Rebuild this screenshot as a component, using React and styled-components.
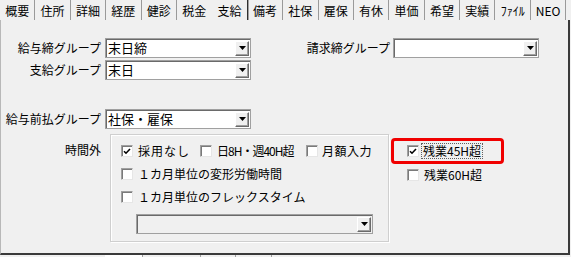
import React from 'react';
import styled, { createGlobalStyle } from 'styled-components';

const GlobalStyle = createGlobalStyle`
  html, body {
    margin: 0;
    padding: 0;
    background: #f0f0f0;
  }
  body {
    font-family: "Noto Sans CJK JP", "Noto Sans", sans-serif;
  }
`;

const Screen = styled.div`
  width: 571px;
  height: 257px;
  overflow: hidden;
  background: #f0f0f0;
  color: #000;
  font-family: "Noto Sans CJK JP", "Noto Sans", sans-serif;
  font-size: 12px;
`;

const TabBar = styled.div`
  display: flex;
  height: 20px;
`;

const Tab = styled.div`
  flex: 0 0 35.4px;
  box-sizing: border-box;
  display: flex;
  align-items: center;
  justify-content: center;
  font-size: 12px;
  line-height: 1;
  padding-top: 1px;
  border-right: 1px solid ${(p) => (p.$active ? '#303030' : p.$hideSep ? 'transparent' : '#9a9a9a')};
  box-shadow: ${(p) => (p.$active ? '1px 0 0 #a0a0a0' : 'none')};
`;

const Panel = styled.div`
  box-sizing: border-box;
  width: 570px;
  height: 235px;
  border-left: 1px solid #b8b8b8;
  border-right: 2px solid #3a3a3a;
  border-bottom: 2px solid #3a3a3a;
  padding-top: 18px;
`;

const Row = styled.div`
  display: flex;
  align-items: ${(p) => p.$align || 'center'};
  margin-top: ${(p) => p.$mt || 0}px;
`;

const Label = styled.div`
  width: ${(p) => p.$w}px;
  margin-left: ${(p) => p.$ml || 0}px;
  margin-right: ${(p) => p.$mr || 4}px;
  padding-top: ${(p) => p.$pt || 0}px;
  text-align: right;
  font-size: 12px;
  line-height: 14px;
  white-space: nowrap;
`;

const Select = styled.div`
  box-sizing: border-box;
  width: ${(p) => p.$w}px;
  height: 20px;
  display: flex;
  align-items: center;
  background: ${(p) => (p.$disabled ? '#f0f0f0' : '#fff')};
  border: 1px solid #a0a0a0;
  box-shadow: inset 1px 1px 0 #6a6a6a;
  padding: 2px 1px 2px 2px;
  margin-left: ${(p) => p.$ml || 0}px;
  margin-top: ${(p) => p.$mt || 0}px;
`;

const SelectText = styled.span`
  flex: 1;
  font-size: 13px;
  line-height: 16px;
  white-space: nowrap;
`;

const ArrowButton = styled.span`
  box-sizing: border-box;
  width: 14px;
  height: 15px;
  display: flex;
  align-items: center;
  justify-content: center;
  background: #f0f0f0;
  border: 1px solid;
  border-color: #fff #6a6a6a #6a6a6a #fff;
  box-shadow: inset -1px -1px 0 #a0a0a0;
`;

const GroupBox = styled.div`
  box-sizing: border-box;
  width: 279px;
  height: 108px;
  margin-left: 5px;
  border: 1px solid #cfcfcf;
  box-shadow: inset 1px 1px 0 #fff, 1px 1px 0 #fff;
  padding: 8px 0 0 10px;
  display: flex;
  flex-direction: column;
`;

const CheckRow = styled.div`
  display: flex;
  align-items: center;
  height: 16px;
  margin-top: ${(p) => p.$mt || 0}px;
`;

const CheckItem = styled.div`
  display: flex;
  align-items: center;
  width: ${(p) => (p.$w ? `${p.$w}px` : 'auto')};
  margin-left: ${(p) => p.$ml || 0}px;
  margin-top: ${(p) => p.$mt || 0}px;
`;

const Box = styled.span`
  box-sizing: border-box;
  flex: 0 0 12px;
  width: 12px;
  height: 12px;
  display: flex;
  align-items: center;
  justify-content: center;
  background: #fff;
  border: 1px solid;
  border-color: #a0a0a0 #e6e6e6 #e6e6e6 #a0a0a0;
  box-shadow: inset 1px 1px 0 #7a7a7a;
`;

const CheckText = styled.span`
  margin-left: ${(p) => p.$ml || 3}px;
  font-size: 12px;
  line-height: 14px;
  white-space: nowrap;
  letter-spacing: ${(p) => p.$ls || 0}px;
  border: 1px dotted ${(p) => (p.$focus ? '#606060' : 'transparent')};
  padding: 0 1px;
`;

const SideColumn = styled.div`
  display: flex;
  flex-direction: column;
  margin-left: 2px;
  margin-top: 4px;
`;

const Highlight = styled.div`
  box-sizing: border-box;
  width: 113px;
  height: 26px;
  border: 3px solid #f00000;
  border-radius: 4px;
  display: flex;
  align-items: center;
  padding-left: 13px;
`;

const BottomTabs = styled.div`
  display: flex;
  height: 16px;
  margin-left: 105px;
`;

const BottomTab = styled.div`
  box-sizing: border-box;
  width: ${(p) => p.$w}px;
  background: ${(p) => (p.$active ? '#fff' : 'transparent')};
  border-right: 1px solid #a0a0a0;
`;

const Check = ({ checked }) => (
  <Box>
    {checked && (
      <svg width="8" height="7" viewBox="0 0 8 7">
        <path d="M1 3.2 L3 5.2 L7 1" fill="none" stroke="#000" strokeWidth="1.6" />
      </svg>
    )}
  </Box>
);

const Combo = ({ w, text, disabled, ml, mt }) => (
  <Select $w={w} $disabled={disabled} $ml={ml} $mt={mt}>
    <SelectText>{text}</SelectText>
    <ArrowButton>
      <svg width="7" height="4" viewBox="0 0 7 4">
        <path d="M0 0 H7 L3.5 4 Z" fill="#000" />
      </svg>
    </ArrowButton>
  </Select>
);

const tabs = ['概要', '住所', '詳細', '経歴', '健診', '税金', '支給', '備考', '社保', '雇保', '有休', '単価', '希望', '実績', 'ﾌｧｲﾙ', 'NEO'];
const activeTab = 6;

export default function App() {
  return (
    <Screen>
      <GlobalStyle />
      <TabBar>
        {tabs.map((t, i) => (
          <Tab key={t} $active={i === activeTab} $hideSep={i === activeTab - 1}>
            {t}
          </Tab>
        ))}
      </TabBar>

      <Panel>
        <Row>
          <Label $w={100}>給与締グループ</Label>
          <Combo w={146} text="末日締" />
          <Label $w={84} $ml={55} $mr={3}>請求締グループ</Label>
          <Combo w={146} text="" />
        </Row>
        <Row $mt={2}>
          <Label $w={100}>支給グループ</Label>
          <Combo w={146} text="末日" />
        </Row>
        <Row $mt={29}>
          <Label $w={100}>給与前払グループ</Label>
          <Combo w={146} text="社保・雇保" />
        </Row>

        <Row $mt={5} $align="flex-start">
          <Label $w={100} $mr={0} $pt={9}>時間外</Label>
          <GroupBox>
            <CheckRow>
              <CheckItem $w={79}>
                <Check checked />
                <CheckText $ls={1}>採用なし</CheckText>
              </CheckItem>
              <CheckItem $w={106}>
                <Check />
                <CheckText $ls={-1}>日8H・週40H超</CheckText>
              </CheckItem>
              <CheckItem>
                <Check />
                <CheckText $ml={2} $ls={0.5}>月額入力</CheckText>
              </CheckItem>
            </CheckRow>
            <CheckRow $mt={7}>
              <CheckItem>
                <Check />
                <CheckText>１カ月単位の変形労働時間</CheckText>
              </CheckItem>
            </CheckRow>
            <CheckRow $mt={7}>
              <CheckItem>
                <Check />
                <CheckText>１カ月単位のフレックスタイム</CheckText>
              </CheckItem>
            </CheckRow>
            <Combo w={237} text="" disabled ml={15} mt={9} />
          </GroupBox>

          <SideColumn>
            <Highlight>
              <Check checked />
              <CheckText $ml={2} $focus>残業45H超</CheckText>
            </Highlight>
            <CheckItem $ml={16} $mt={3}>
              <Check />
              <CheckText $ml={3}>残業60H超</CheckText>
            </CheckItem>
          </SideColumn>
        </Row>
      </Panel>

      <BottomTabs>
        <BottomTab $w={38} $active />
        <BottomTab $w={58} />
        <BottomTab $w={35} />
        <BottomTab $w={36} />
      </BottomTabs>
    </Screen>
  );
}
